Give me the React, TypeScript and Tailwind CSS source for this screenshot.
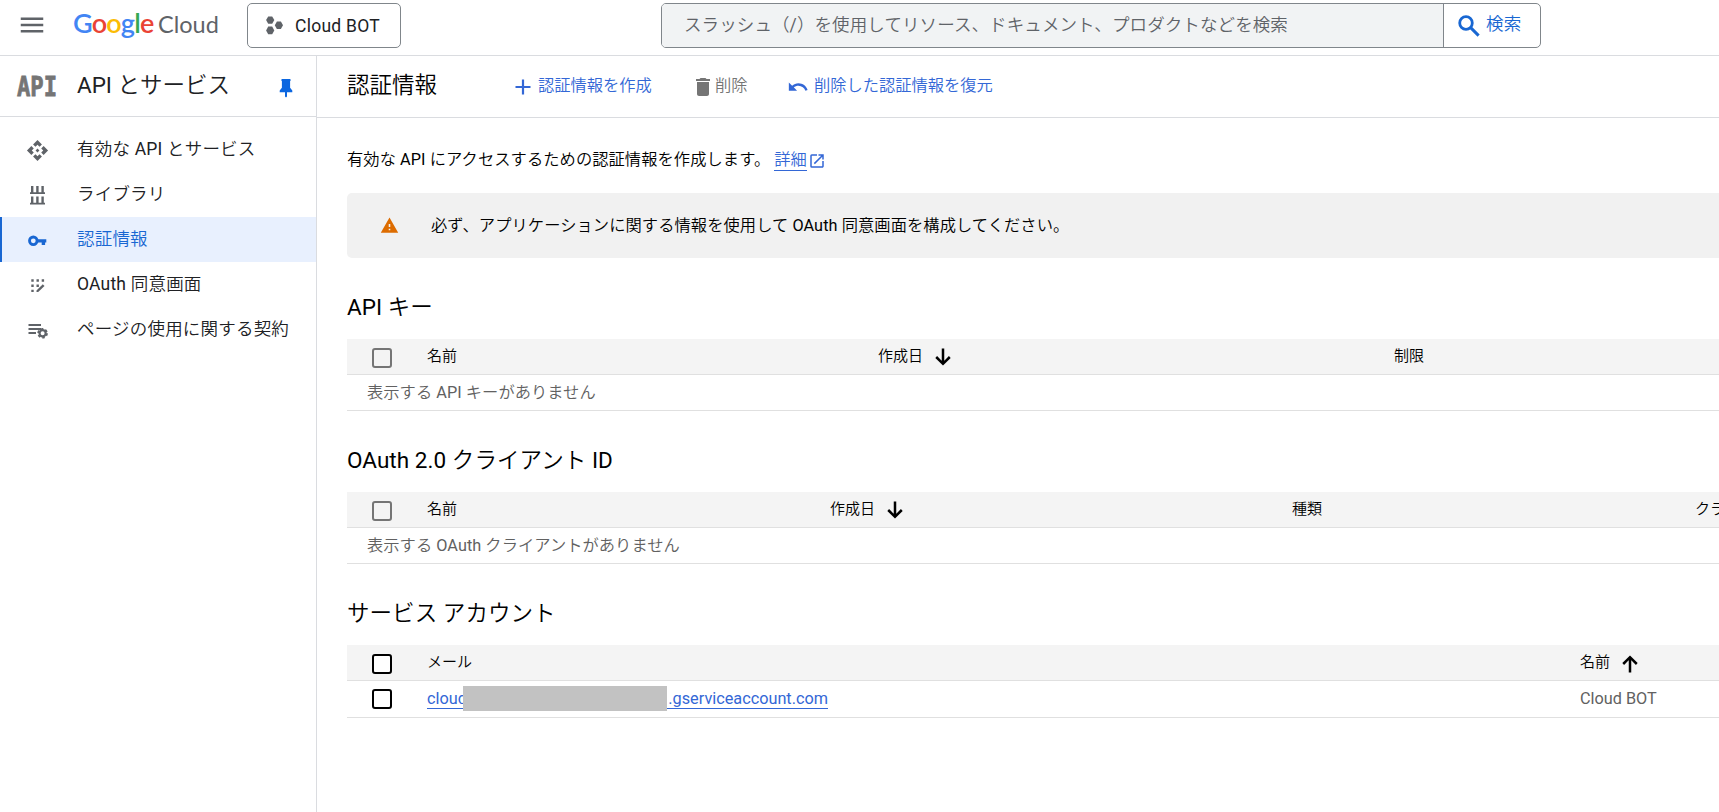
import type { ReactNode } from 'react'
import clsx from 'clsx'
import { MdApi, MdDelete, MdMenu, MdOpenInNew, MdUndo, MdWarning } from 'react-icons/md'

function ProjectIcon() {
  return (
    <svg width="17" height="19" viewBox="0 0 17 19" fill="#5f6368">
      <path d="M2.2 0.4h4l2.1 3.7-2.1 3.7h-4L0.1 4.1z" />
      <path d="M2.2 10.6h4l2.1 3.9-2.1 3.7h-4L0.1 14.5z" />
      <path d="M10.9 5.5h4L17 9.3l-2.1 3.7h-4L8.8 9.3z" />
    </svg>
  )
}

function SearchIcon() {
  return (
    <svg width="22" height="22" viewBox="0 0 22 22" fill="none" stroke="#1967d2">
      <circle cx="8" cy="8" r="6.3" strokeWidth="2.8" />
      <path d="M12.6 12.6l8 8" strokeWidth="3" />
    </svg>
  )
}

function PinIcon() {
  return (
    <svg width="14" height="19" viewBox="0 0 14 19" fill="#0b66e0">
      <path d="M3.2 0h7.6c.6 0 .9.4.9.9v.9h-.6v7l2.2 2.6v1.8H8v4.2L7 18.6l-1-1.2v-4.2H.7v-1.8L2.9 8.8v-7h-.6V.9C2.3.4 2.6 0 3.2 0z" />
    </svg>
  )
}

function LibraryIcon() {
  return (
    <svg width="17" height="19" viewBox="0 0 17 19" fill="#5f6368">
      <path d="M2 0h2.4v6.5H2zM7.2 0h2.4v6.5H7.2zM12.4 0h2.4v6.5h-2.4zM1 6.3h15v1.7H1z" />
      <path d="M2 10.5h2.4V17H2zM7.2 10.5h2.4V17H7.2zM12.4 10.5h2.4V17h-2.4zM1 16.7h15v1.7H1z" />
    </svg>
  )
}

function KeyIcon() {
  return (
    <svg width="19" height="12" viewBox="0 0 19 12" fill="none">
      <circle cx="5.3" cy="5.8" r="3.8" stroke="#1967d2" strokeWidth="2.8" />
      <path d="M9.5 4.2h8.8v3.2h-1.2v2.5h-3.4V7.4H9.5z" fill="#1967d2" />
    </svg>
  )
}

function ConsentIcon() {
  return (
    <svg width="14" height="14" viewBox="0 0 14 14" fill="#5f6368">
      <path d="M0.3 0.3h2.4v2.4H0.3zM5.5 0.3h2.4v2.4H5.5zM10.7 0.3h2.4v2.4h-2.4z" />
      <path d="M0.3 5.5h2.4v2.4H0.3zM5.5 5.5h2.4v2.4H5.5zM0.3 10.7h2.4v2.4H0.3z" />
      <path d="M5.5 11.4l6.3-6.2 1.7 1.7-6.3 6.2H5.5z" />
    </svg>
  )
}

function AgreementIcon() {
  return (
    <svg width="20" height="16" viewBox="0 0 20 16" fill="none">
      <path d="M0.5 2H13M0.5 6H13M0.5 10h7.5" stroke="#5f6368" strokeWidth="1.8" />
      <circle cx="14.6" cy="10.3" r="3.1" stroke="#5f6368" strokeWidth="2.2" />
      <circle cx="14.6" cy="10.3" r="4.4" stroke="#5f6368" strokeWidth="1.8" strokeDasharray="2.5 2.1" />
    </svg>
  )
}

function PlusIcon() {
  return (
    <svg width="16" height="16" viewBox="0 0 16 16" fill="none" stroke="#3367d6" strokeWidth="2.2">
      <path d="M8 0.5v15M0.5 8h15" />
    </svg>
  )
}

function SortArrow({ up }: { up?: boolean }) {
  return (
    <svg
      className={clsx('ml-3', up ? 'mt-[3px] rotate-180' : 'mt-[1px]')}
      width="16"
      height="18"
      viewBox="0 0 16 18"
      fill="none"
      stroke="black"
      strokeWidth="2.5"
    >
      <path d="M8 0.5v15M1.2 9l6.8 6.8L14.8 9" />
    </svg>
  )
}

const navItems: { label: string; icon: ReactNode; active?: boolean }[] = [
  { label: '有効な API とサービス', icon: <MdApi size={23} /> },
  { label: 'ライブラリ', icon: <LibraryIcon /> },
  { label: '認証情報', icon: <KeyIcon />, active: true },
  { label: 'OAuth 同意画面', icon: <ConsentIcon /> },
  { label: 'ページの使用に関する契約', icon: <AgreementIcon /> },
]

function Checkbox({ muted }: { muted?: boolean }) {
  return (
    <span
      className={clsx(
        'block size-5 rounded-[3px] border-2',
        muted ? 'border-[#757575]' : 'border-black bg-white'
      )}
    />
  )
}

function SectionTitle({ children }: { children: ReactNode }) {
  return (
    <h2 className="h-[81px] pt-8 text-[22.5px] leading-[34px] tracking-[0.05px]">{children}</h2>
  )
}

function HeadRow({ muted, children }: { muted?: boolean; children: ReactNode }) {
  return (
    <div className="flex h-9 border-b border-[#e0e0e0] bg-[#f4f4f4] pl-[25px] text-[15px] leading-[34px]">
      <div className="w-[55px] shrink-0 pt-[9px]">
        <Checkbox muted={muted} />
      </div>
      {children}
    </div>
  )
}

function SortLabel({ up, children }: { up?: boolean; children: ReactNode }) {
  return (
    <span className="flex h-[34px] items-center">
      {children}
      <SortArrow up={up} />
    </span>
  )
}

function EmptyRow({ children }: { children: ReactNode }) {
  return (
    <div className="h-9 border-b border-[#e0e0e0] pl-5 text-[16.25px] leading-[35px] tracking-[0.05px] text-[#616161]">
      {children}
    </div>
  )
}

function Header() {
  return (
    <header className="flex h-14 shrink-0 border-b border-[#dadce0]">
      <div className="flex w-[247px] shrink-0 items-center pl-[17px] pb-[5px]">
        <MdMenu size={30} color="#5f6368" />
        <div className="ml-[26px] flex items-baseline pb-[5px] leading-none whitespace-nowrap">
          <span className="w-[85px] font-[Lato] text-[27px] font-semibold tracking-[-0.8px]">
            <span className="text-[#4285f4]">G</span>
            <span className="text-[#ea4335]">o</span>
            <span className="text-[#fbbc04]">o</span>
            <span className="text-[#4285f4]">g</span>
            <span className="text-[#34a853]">l</span>
            <span className="text-[#ea4335]">e</span>
          </span>
          <span className="font-[Lato] text-[23.5px] text-[#5f6368]">Cloud</span>
        </div>
      </div>
      <button className="mt-[3px] flex h-[45px] w-[154px] shrink-0 items-center rounded-[5px] border border-[#80868b] pl-[18px] text-[17.5px] text-[#202124]">
        <ProjectIcon />
        <span className="ml-3 pt-[2px] tracking-[0.25px]">Cloud BOT</span>
      </button>
      <div className="mt-[3px] ml-[260px] flex h-[45px] w-[880px] shrink-0 overflow-hidden rounded-[5px] border border-[#80868b]">
        <div className="w-[782px] border-r border-[#80868b] bg-[#f1f3f4] pl-[22px] text-[17.5px] leading-[43px] tracking-[0.1px] text-[#5f6368]">
          スラッシュ（/）を使用してリソース、ドキュメント、プロダクトなどを検索
        </div>
        <button className="flex items-center pl-[14px] text-[17.5px] text-[#1967d2]">
          <SearchIcon />
          <span className="ml-[6px] pb-[2px] tracking-[0.2px]">検索</span>
        </button>
      </div>
    </header>
  )
}

function Sidebar() {
  return (
    <aside className="w-[317px] shrink-0 border-r border-[#dadce0]">
      <div className="flex h-[61px] items-center border-b border-[#dadce0] text-[#202124]">
        <div className="w-[77px] pl-[17px]">
          <span className="block w-[49px] origin-left scale-x-[0.82] font-['DejaVu_Sans_Mono'] text-[27px] font-bold leading-none text-[#757575] [-webkit-text-stroke:0.8px_#757575]">
            API
          </span>
        </div>
        <span className="flex-1 text-[22.5px]">API とサービス</span>
        <span className="mr-[23px] pt-1">
          <PinIcon />
        </span>
      </div>
      <nav className="pt-[10px]">
        {navItems.map((item) => (
          <div
            key={item.label}
            className={clsx(
              'flex h-[45px] items-center border-l-2 text-[17.5px] tracking-[0.2px]',
              item.active
                ? 'border-[#1967d2] bg-[#e8f0fe] text-[#1967d2]'
                : 'border-transparent text-[#202124]'
            )}
          >
            <span
              className={clsx(
                'flex w-[71px] justify-center pt-[2px]',
                item.active ? 'text-[#1967d2]' : 'text-[#5f6368]'
              )}
            >
              {item.icon}
            </span>
            <span className="ml-1">{item.label}</span>
          </div>
        ))}
      </nav>
    </aside>
  )
}

function Toolbar() {
  return (
    <div className="flex h-[62px] items-center border-b border-[#dadce0] pl-[30px] text-[16.25px] text-[#3367d6]">
      <h1 className="w-[168px] pb-[2px] text-[22.5px] text-black">認証情報</h1>
      <button className="flex w-[176px] items-center">
        <PlusIcon />
        <span className="ml-[7px]">認証情報を作成</span>
      </button>
      <button className="flex w-[96px] items-center text-[#757575]">
        <MdDelete size={24} />
        <span>削除</span>
      </button>
      <button className="flex items-center">
        <MdUndo size={22} />
        <span className="ml-[5px]">削除した認証情報を復元</span>
      </button>
    </div>
  )
}

export default function App() {
  return (
    <div className="flex h-[812px] w-[1719px] flex-col overflow-hidden bg-white font-[Roboto,'Noto_Sans_CJK_JP_DemiLight','Noto_Sans_CJK_JP',sans-serif] text-black">
      <Header />
      <div className="flex min-h-0 flex-1">
        <Sidebar />
        <main className="min-w-0 flex-1 overflow-hidden whitespace-nowrap">
          <Toolbar />
          <div className="pl-[30px]">
            <p className="flex h-[75px] items-center pt-[10px] text-[16.25px] tracking-[0.08px]">
              有効な API にアクセスするための認証情報を作成します。
              <a className="ml-1 border-b border-[#3367d6] leading-5 text-[#3367d6]">詳細</a>
              <MdOpenInNew className="ml-[1px]" size={18} color="#3367d6" />
            </p>
            <div className="flex h-[65px] items-center rounded-l-[5px] bg-[#f1f1f1] pl-[33px] text-[16.25px] tracking-[0.08px]">
              <MdWarning size={19} color="#dd6c00" />
              <span className="ml-8 pt-[1px]">
                必ず、アプリケーションに関する情報を使用して OAuth 同意画面を構成してください。
              </span>
            </div>

            {/* API keys */}
            <SectionTitle>API キー</SectionTitle>
            <HeadRow muted>
              <span className="w-[451px] shrink-0">名前</span>
              <div className="w-[516px] shrink-0">
                <SortLabel>作成日</SortLabel>
              </div>
              <span>制限</span>
            </HeadRow>
            <EmptyRow>表示する API キーがありません</EmptyRow>

            {/* OAuth clients */}
            <SectionTitle>OAuth 2.0 クライアント ID</SectionTitle>
            <HeadRow muted>
              <span className="w-[403px] shrink-0">名前</span>
              <div className="w-[462px] shrink-0">
                <SortLabel>作成日</SortLabel>
              </div>
              <span className="w-[403px] shrink-0">種類</span>
              <span>クライアント ID</span>
            </HeadRow>
            <EmptyRow>表示する OAuth クライアントがありません</EmptyRow>

            {/* Service accounts */}
            <SectionTitle>サービス アカウント</SectionTitle>
            <HeadRow>
              <span className="w-[1153px] shrink-0">メール</span>
              <SortLabel up>名前</SortLabel>
            </HeadRow>
            <div className="flex h-[37px] border-b border-[#e0e0e0] pl-[25px] text-[16.25px] leading-[35px]">
              <div className="w-[55px] shrink-0 pt-2">
                <Checkbox />
              </div>
              <div className="w-[1153px] shrink-0 pt-2">
                <a className="relative flex h-5 w-[401px] justify-between border-b border-[#3367d6] leading-5 text-[#3367d6]">
                  <span>cloud</span>
                  <span>.gserviceaccount.com</span>
                  <span className="absolute top-[-3px] left-9 h-[25px] w-[204px] bg-[#c2c2c2]" />
                </a>
              </div>
              <span className="text-[#616161]">Cloud BOT</span>
            </div>
          </div>
        </main>
      </div>
    </div>
  )
}
